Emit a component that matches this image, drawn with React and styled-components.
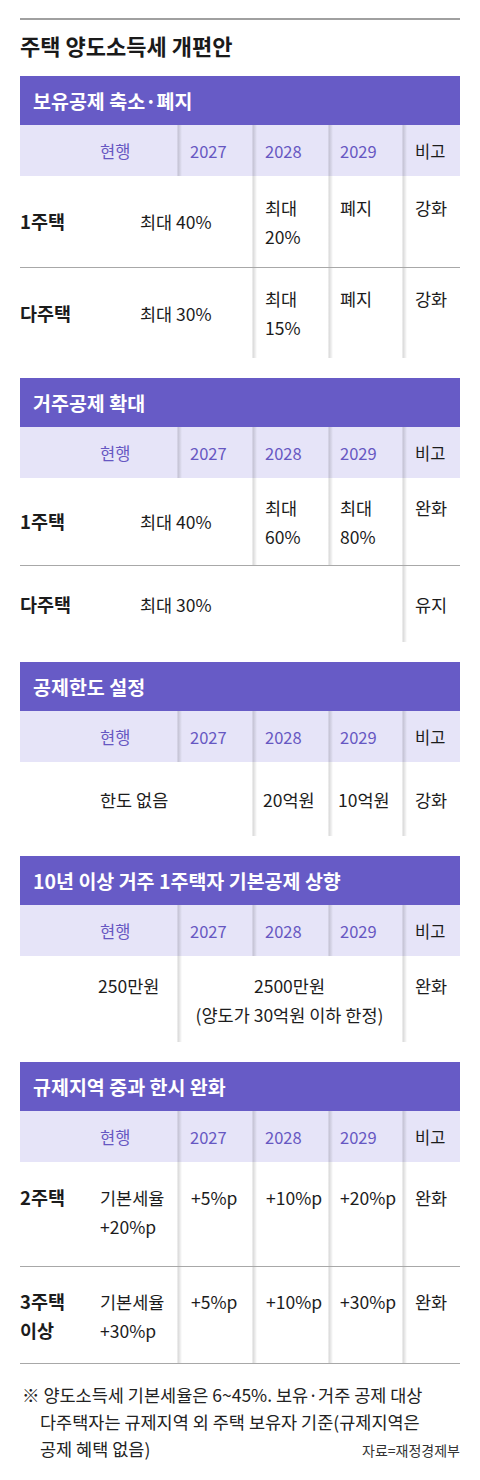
import React from 'react';
import styled, { createGlobalStyle } from 'styled-components';

const GlobalStyle = createGlobalStyle`
  body {
    margin: 0;
    background: #fff;
    font-family: "Noto Sans CJK KR", "Noto Sans", sans-serif;
    color: #1c1c1c;
  }
`;

const COLS = '67px 90px 75px 76px 74px 58px';

const sections = [
  {
    title: '보유공제 축소·폐지',
    rows: [
      {
        h: 91,
        pt: 17,
        cells: [
          { col: 1, text: '1주택', label: true, mid: true },
          { col: 2, span: 2, text: '최대 40%', pl: 53, mid: true },
          { col: 4, text: ['최대', '20%'], div: true },
          { col: 5, text: '폐지', div: true, pl: 12 },
          { col: 6, text: '강화', div: true },
        ],
      },
      {
        h: 91,
        pt: 16,
        line: true,
        cells: [
          { col: 1, text: '다주택', label: true, mid: true },
          { col: 2, span: 2, text: '최대 30%', pl: 53, mid: true },
          { col: 4, text: ['최대', '15%'], div: true },
          { col: 5, text: '폐지', div: true, pl: 12 },
          { col: 6, text: '강화', div: true },
        ],
      },
    ],
  },
  {
    title: '거주공제 확대',
    rows: [
      {
        h: 87,
        pt: 15,
        cells: [
          { col: 1, text: '1주택', label: true, mid: true },
          { col: 2, span: 2, text: '최대 40%', pl: 53, mid: true },
          { col: 4, text: ['최대', '60%'], div: true },
          { col: 5, text: ['최대', '80%'], div: true, pl: 12 },
          { col: 6, text: '완화', div: true },
        ],
      },
      {
        h: 77,
        line: true,
        cells: [
          { col: 1, text: '다주택', label: true, mid: true },
          { col: 2, span: 4, text: '최대 30%', pl: 53, mid: true },
          { col: 6, text: '유지', div: true, mid: true },
        ],
      },
    ],
  },
  {
    title: '공제한도 설정',
    rows: [
      {
        h: 74,
        cells: [
          { col: 2, span: 2, text: '한도 없음', mid: true },
          { col: 4, text: '20억원', div: true, pl: 11, mid: true },
          { col: 5, text: '10억원', div: true, pl: 10, mid: true },
          { col: 6, text: '강화', div: true, mid: true },
        ],
      },
    ],
  },
  {
    title: '10년 이상 거주 1주택자 기본공제 상향',
    rows: [
      {
        h: 86,
        pt: 15,
        cells: [
          { col: 2, text: '250만원', pl: 11 },
          {
            col: 3,
            span: 3,
            text: ['2500만원', '(양도가 30억원 이하 한정)'],
            div: true,
            center: true,
          },
          { col: 6, text: '완화', div: true },
        ],
      },
    ],
  },
  {
    title: '규제지역 중과 한시 완화',
    rows: [
      {
        h: 104,
        pt: 21,
        cells: [
          { col: 1, text: '2주택', label: true },
          { col: 2, text: ['기본세율', '+20%p'] },
          { col: 3, text: '+5%p', div: true, pl: 14 },
          { col: 4, text: '+10%p', div: true, pl: 14 },
          { col: 5, text: '+20%p', div: true, pl: 12 },
          { col: 6, text: '완화', div: true },
        ],
      },
      {
        h: 97,
        pt: 20,
        line: true,
        cells: [
          { col: 1, text: ['3주택', '이상'], label: true },
          { col: 2, text: ['기본세율', '+30%p'] },
          { col: 3, text: '+5%p', div: true, pl: 14 },
          { col: 4, text: '+10%p', div: true, pl: 14 },
          { col: 5, text: '+30%p', div: true, pl: 12 },
          { col: 6, text: '완화', div: true },
        ],
      },
    ],
  },
];

const heads = [
  { col: 2, text: '현행' },
  { col: 3, text: '2027', div: true },
  { col: 4, text: '2028', div: true },
  { col: 5, text: '2029', div: true, pl: 12 },
  { col: 6, text: '비고', div: true, plain: true },
];

function lines(text) {
  const list = Array.isArray(text) ? text : [text];
  return list.map((t, i) => <span key={i}>{t}</span>);
}

export default function App() {
  return (
    <Page>
      <GlobalStyle />
      <Title>주택 양도소득세 개편안</Title>
      {sections.map((s) => (
        <Section key={s.title}>
          <SectionHead>{s.title}</SectionHead>
          <HeadRow>
            {heads.map((c) => (
              <HeadCell key={c.text} $col={c.col} $div={c.div} $pl={c.pl} $plain={c.plain}>
                {c.text}
              </HeadCell>
            ))}
          </HeadRow>
          {s.rows.map((r, i) => (
            <Row key={i} $h={r.h} $line={r.line}>
              {r.cells.map((c) => (
                <Cell
                  key={c.col}
                  $col={c.col}
                  $span={c.span}
                  $div={c.div}
                  $pl={c.pl}
                  $pt={r.pt}
                  $mid={c.mid}
                  $center={c.center}
                  $label={c.label}
                >
                  {lines(c.text)}
                </Cell>
              ))}
            </Row>
          ))}
        </Section>
      ))}
      <Note>
        <NoteLine>※ 양도소득세 기본세율은 6~45%. 보유·거주 공제 대상</NoteLine>
        <NoteLine $indent>다주택자는 규제지역 외 주택 보유자 기준(규제지역은</NoteLine>
        <NoteLast>
          <span>공제 혜택 없음)</span>
          <Source>자료=재정경제부</Source>
        </NoteLast>
      </Note>
    </Page>
  );
}

const divider = `
  background-image: linear-gradient(
    to right,
    rgba(0, 0, 0, 0.05) 0,
    rgba(0, 0, 0, 0.13) 1.5px,
    rgba(0, 0, 0, 0.06) 3.5px,
    rgba(0, 0, 0, 0) 5px
  );
  background-repeat: no-repeat;
  background-size: 5px 100%;
`;

const Page = styled.main`
  width: 440px;
  padding: 18px 20px 20px;
  display: flex;
  flex-direction: column;
`;

const Title = styled.h1`
  margin: 0 0 16px;
  padding-top: 10px;
  border-top: 2px solid #a0a0a0;
  font-size: 22px;
  line-height: 30px;
  font-weight: 700;
  color: #1a1a1a;
`;

const Section = styled.section`
  display: flex;
  flex-direction: column;
  margin-bottom: 20px;

  &:last-of-type {
    margin-bottom: 0;
  }
`;

const SectionHead = styled.h2`
  margin: 0;
  height: 49px;
  display: flex;
  align-items: center;
  padding-left: 13px;
  background: #675bc6;
  color: #fff;
  font-size: 19.5px;
  font-weight: 700;
`;

const HeadRow = styled.div`
  display: grid;
  grid-template-columns: ${COLS};
  height: 51px;
  background: #e6e4f8;
`;

const HeadCell = styled.div`
  grid-column: ${(p) => p.$col};
  display: flex;
  align-items: center;
  padding-left: ${(p) => p.$pl ?? 13}px;
  font-size: 16.5px;
  color: ${(p) => (p.$plain ? '#1c1c1c' : '#6657c2')};
  ${(p) => p.$div && divider}
`;

const Row = styled.div`
  display: grid;
  grid-template-columns: ${COLS};
  box-sizing: border-box;
  height: ${(p) => p.$h}px;
  border-top: ${(p) => (p.$line ? '1px solid #a8a8a8' : 'none')};
`;

const Cell = styled.div`
  grid-column: ${(p) => p.$col} / span ${(p) => p.$span || 1};
  display: flex;
  flex-direction: column;
  justify-content: ${(p) => (p.$mid ? 'center' : 'flex-start')};
  align-items: ${(p) => (p.$center ? 'center' : 'flex-start')};
  padding-top: ${(p) => (p.$mid ? 0 : p.$pt || 0)}px;
  padding-left: ${(p) => (p.$center ? 0 : p.$label ? 0 : p.$pl ?? 13)}px;
  font-size: ${(p) => (p.$label ? 18.5 : 17.5)}px;
  font-weight: ${(p) => (p.$label ? 700 : 400)};
  line-height: 29px;
  white-space: nowrap;
  color: #1c1c1c;
  ${(p) => p.$div && divider}
`;

const Note = styled.div`
  border-top: 1px solid #a8a8a8;
  padding-top: 17px;
  font-size: 17.5px;
  line-height: 27px;
  color: #222;
`;

const NoteLine = styled.div`
  padding-left: ${(p) => (p.$indent ? 20 : 2)}px;
  white-space: nowrap;
`;

const NoteLast = styled.div`
  display: flex;
  justify-content: space-between;
  align-items: baseline;
  padding-left: 20px;
`;

const Source = styled.span`
  font-size: 14px;
  color: #333;
`;
